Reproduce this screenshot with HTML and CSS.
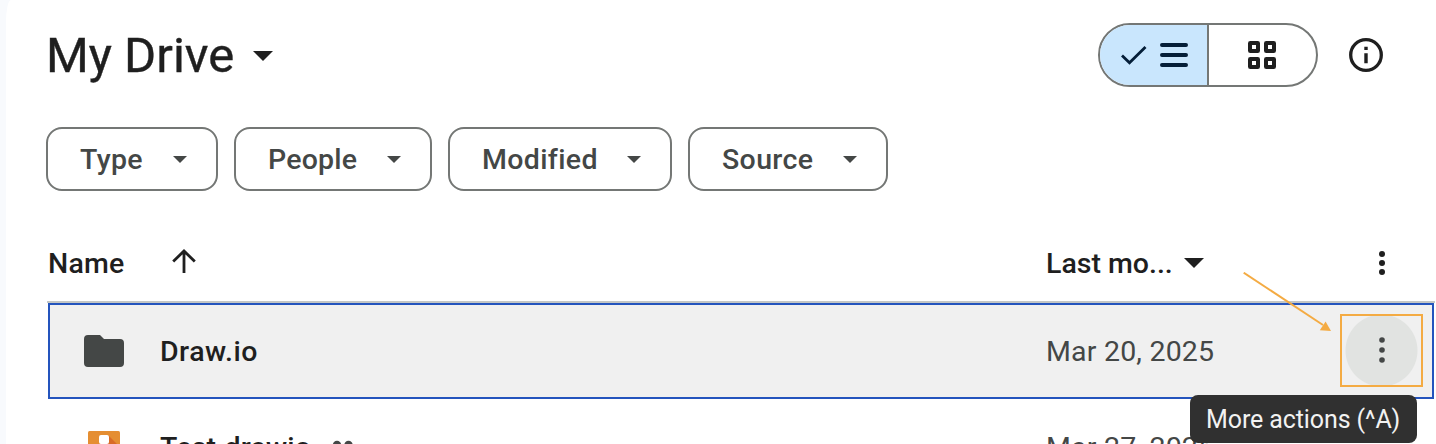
FILE: index.html
```html
<!DOCTYPE html>
<html lang="en">
<head>
<meta charset="utf-8">
<title>My Drive</title>
<link rel="stylesheet" href="styles.css">
</head>
<body>
<main class="panel">
  <header class="header">
    <h1 class="title"><span class="title-text">My Drive</span>
      <svg class="title-caret" width="20" height="10" viewBox="0 0 20 10"><path d="M0 0h20L10 10z"/></svg>
    </h1>
    <div class="view-switch">
      <div class="view view-list">
        <svg width="107" height="60" viewBox="0 0 107 60" fill="none" stroke="#041e38"><path d="M22 30.5l7.5 7.2L45.5 22" stroke-width="2.8"/><path d="M62 20h24M62 30h24M62 40h24" stroke-width="4" stroke-linecap="round"/></svg>
      </div>
      <div class="view view-grid">
        <svg width="28" height="28" viewBox="0 0 28 28" fill="none" stroke="#1f1f1f" stroke-width="4"><rect x="2" y="2" width="8" height="8" rx=".3"/><rect x="18" y="2" width="8" height="8" rx=".3"/><rect x="2" y="18" width="8" height="8" rx=".3"/><rect x="18" y="18" width="8" height="8" rx=".3"/></svg>
      </div>
    </div>
    <svg class="info" width="34" height="34" viewBox="0 0 34 34"><circle cx="17" cy="17" r="15.3" fill="none" stroke="#1f1f1f" stroke-width="3.3"/><path d="M15.3 8.7h3.4V12h-3.4zM15.3 15.3h3.4v10h-3.4z" fill="#1f1f1f"/></svg>
  </header>

  <div class="chips">
    <div class="chip chip-type"><span>Type</span><svg width="14" height="7" viewBox="0 0 14 7"><path d="M0 0h14L7 7z"/></svg></div>
    <div class="chip chip-people"><span>People</span><svg width="14" height="7" viewBox="0 0 14 7"><path d="M0 0h14L7 7z"/></svg></div>
    <div class="chip chip-modified"><span>Modified</span><svg width="14" height="7" viewBox="0 0 14 7"><path d="M0 0h14L7 7z"/></svg></div>
    <div class="chip chip-source"><span>Source</span><svg width="14" height="7" viewBox="0 0 14 7"><path d="M0 0h14L7 7z"/></svg></div>
  </div>

  <section class="table">
    <div class="columns">
      <div class="col-name"><span class="name-label">Name</span>
        <svg width="24" height="24" viewBox="0 0 24 24" fill="none" stroke="#1f1f1f" stroke-width="2.8"><path d="M12 24V2M1.2 12.5L12 2l10.8 10.5"/></svg>
      </div>
      <div class="col-date"><span class="date-label">Last mo...</span>
        <svg width="20" height="10" viewBox="0 0 20 10"><path d="M0 0h20L10 10z"/></svg>
      </div>
      <svg class="dots" width="6" height="24" viewBox="0 0 6 24"><circle cx="3" cy="3" r="3"/><circle cx="3" cy="12" r="3"/><circle cx="3" cy="21" r="3"/></svg>
    </div>
    <div class="row row-selected">
      <div class="file-icon"><svg width="40" height="32" viewBox="0 0 40 32"><path d="M4 0h12l4 4h16a4 4 0 0 1 4 4v20a4 4 0 0 1-4 4H4a4 4 0 0 1-4-4V4a4 4 0 0 1 4-4z" fill="#444746"/></svg></div>
      <div class="file-name"><span class="draw-label">Draw.io</span></div>
      <div class="file-date">Mar 20, 2025</div>
      <div class="action"><svg width="6" height="26" viewBox="0 0 6 26"><circle cx="3" cy="3" r="2.8"/><circle cx="3" cy="13" r="2.8"/><circle cx="3" cy="23" r="2.8"/></svg>
        <div class="tooltip"><span>More actions (^A)</span></div>
      </div>
    </div>
    <div class="row">
      <div class="file-icon"><svg width="32" height="32" viewBox="0 0 32 32"><rect width="32" height="32" rx="1.5" fill="#e58e32"/><path d="M20 4l12 12v16H10l8-16z" fill="#d96b27"/><path d="M13 4h6a2 2 0 0 1 2 2v5a2 2 0 0 1-2 2l4 6h3v9h-9v-9h2l-3-6-3 6h2v9H6v-9h3l4-6a2 2 0 0 1-2-2V6a2 2 0 0 1 2-2z" fill="#fff"/></svg></div>
      <div class="file-name"><span class="test-label">Test.drawio</span>
        <svg class="people" width="22" height="20" viewBox="0 0 22 20" fill="#444746"><circle cx="5" cy="5" r="4.2"/><circle cx="16.5" cy="5" r="4.2"/><path d="M0 18c0-8 11-8 11 0zM11 18c0-8 11-8 11 0z"/></svg>
      </div>
      <div class="file-date">Mar 27, 2025</div>
      <div></div>
    </div>
  </section>
  <svg class="pointer" width="90" height="64" viewBox="0 0 90 64"><path d="M.7.7L80 53" stroke="#f4ab43" stroke-width="2" fill="none"/><path d="M88 59l-11.2-.8 5.8-8.6z" fill="#f4ab43"/></svg>
</main>
</body>
</html>
```
FILE: styles.css
```css
* { box-sizing: border-box; }
body { margin: 0; height: 444px; overflow: hidden; background: #f8fafd; font-family: Roboto, sans-serif; color: #1f1f1f; fill: #1f1f1f; }
svg { display: block; flex: none; }
.panel { position: relative; height: 444px; margin-left: 6px; padding-left: 40px; overflow: hidden; background: #fff; border-top-left-radius: 5px 22px; }

.header { display: flex; align-items: center; height: 110px; padding-right: 53px; }
.title { display: flex; align-items: center; flex: 1; margin: 0; font-size: 49px; line-height: 60px; font-weight: 400; }
.title-text { width: 207px; padding-top: 2px; white-space: nowrap; -webkit-text-stroke: .4px #1f1f1f; }
.title-caret { margin-top: 2px; }
.view-switch { display: flex; width: 220px; height: 64px; border: 2px solid #747775; border-radius: 32px; overflow: hidden; }
.view { display: flex; align-items: center; justify-content: center; }
.view-list { width: 109px; background: #c9e6fd; border-right: 2px solid #747775; }
.view-grid { flex: 1; padding-right: 2px; }
.info { margin-left: 31px; }

.chips { display: flex; gap: 16px; margin-top: 17px; }
.chip { display: flex; align-items: center; justify-content: space-between; height: 64px; padding: 0 29px 0 32px; border: 2px solid #747775; border-radius: 16px; font-size: 28.5px; font-weight: 500; letter-spacing: .35px; color: #444746; fill: #444746; }
.chip-type { width: 172px; }
.chip-people { width: 198px; letter-spacing: .2px; }
.chip-modified { width: 224px; }
.chip-source { width: 200px; }

.table { margin: 32px 1px 0 1px; }
.columns { display: grid; grid-template-columns: 998px 1fr 55px; align-items: center; height: 80px; border-bottom: 2px solid #c4c7c5; font-size: 28.5px; font-weight: 500; }
.col-name, .col-date { display: flex; align-items: center; padding: 2px 0 0 1px; }
.col-name svg { margin-top: -4px; }
.name-label { width: 124px; letter-spacing: .2px; }
.date-label { width: 138px; }
.dots { margin: 2px 0 0 -1px; }
.row { display: grid; grid-template-columns: 112px 886px 293px 1fr; align-items: center; height: 96px; margin: 0 1px; font-size: 28.5px; }
.row-selected { grid-template-columns: 110px 886px 294px 1fr; background: #f0f0f0; border: 2px solid #2454bd; }
.file-icon { padding-left: 34px; }
.row:not(.row-selected) .file-icon { padding-left: 40px; }
.file-name { display: flex; align-items: center; font-weight: 500; }
.file-date { color: #444746; letter-spacing: .2px; }
.draw-label { letter-spacing: .5px; }
.test-label { width: 172px; letter-spacing: .2px; }
.people { margin-top: 5px; }
.action { position: relative; display: flex; align-items: center; justify-content: center; width: 83px; height: 73px; margin-top: -2px; border: 2px solid #f4ab43; background: radial-gradient(circle at center, #e1e3e1 35.5px, transparent 36.5px); fill: #444746; }
.tooltip { position: absolute; top: 79px; left: -152px; display: flex; align-items: center; width: 227px; height: 48px; padding: 2px 0 0 16px; border-radius: 8px; background: #303030; color: #f2f2f2; font-size: 25px; letter-spacing: -.1px; white-space: nowrap; }
.pointer { position: absolute; left: 1237px; top: 272px; }
```
